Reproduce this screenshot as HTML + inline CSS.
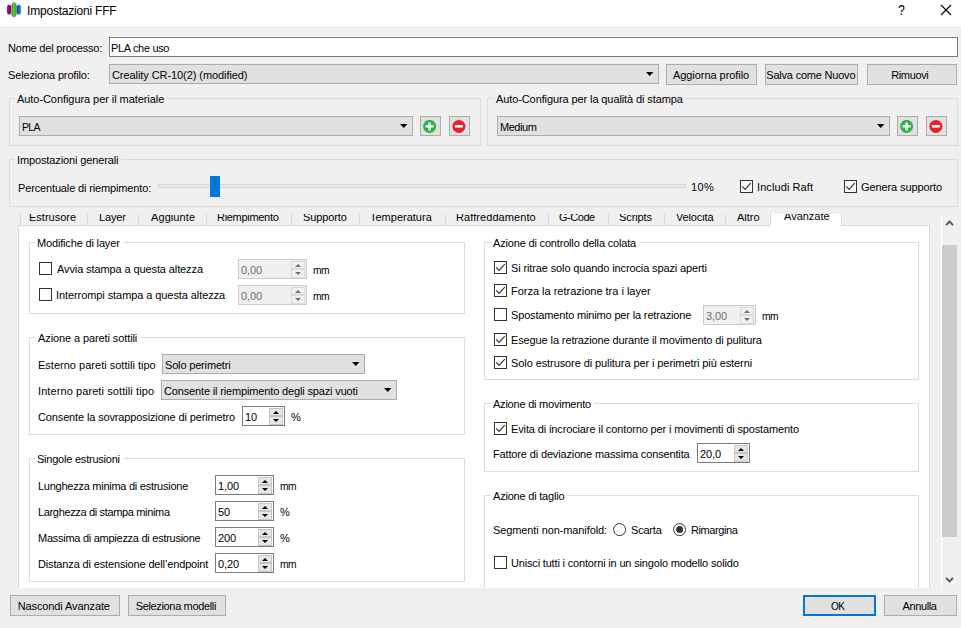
<!DOCTYPE html>
<html><head><meta charset="utf-8">
<style>
*{box-sizing:border-box;margin:0;padding:0}
html,body{width:961px;height:628px;overflow:hidden;background:#f0f0f0;font-family:"Liberation Sans",sans-serif;font-size:11px;color:#000}
.a{position:absolute}
.t{position:absolute;white-space:nowrap;line-height:13px;letter-spacing:-0.13px}
.btn{position:absolute;background:#e1e1e1;border:1px solid #adadad}
.grp{position:absolute;border:1px solid #dcdcdc}
.cb{position:absolute;width:13px;height:13px;border:1px solid #333;background:#fff}
.cb svg{position:absolute;left:0;top:0}
.arr{position:absolute;width:0;height:0;border-left:3.5px solid transparent;border-right:3.5px solid transparent;border-top:4px solid #000}
.spin{position:absolute;background:#fff;border:1px solid #7a7a7a}
.spin.dis{background:#f0f0f0;border-color:#cccccc;color:#6d6d6d}
.sb{position:absolute;right:1px;width:14px;background:#e6e6e6;border:1px solid #c6c6c6}
.dis .sb{background:#f0f0f0;border-color:#dadada}
.up{position:absolute;width:0;height:0;border-left:3px solid transparent;border-right:3px solid transparent;border-bottom:3px solid #000}
.dn{position:absolute;width:0;height:0;border-left:3px solid transparent;border-right:3px solid transparent;border-top:3px solid #000}
.dis .up{border-bottom-color:#6d6d6d}.dis .dn{border-top-color:#6d6d6d}
</style></head><body>

<div class="a" style="left:0;top:0;width:961px;height:26px;background:#fff"></div>
<svg class="a" style="left:6px;top:1px" width="16" height="18" viewBox="0 0 16 18">
 <defs>
  <linearGradient id="gp" x1="0" x2="1"><stop offset="0" stop-color="#e0006a"/><stop offset="1" stop-color="#4a0a80"/></linearGradient>
  <linearGradient id="gg" x1="0" x2="1"><stop offset="0" stop-color="#1a9a30"/><stop offset="0.5" stop-color="#7ac22a"/><stop offset="1" stop-color="#1a9a30"/></linearGradient>
  <linearGradient id="gb" x1="0" x2="1"><stop offset="0" stop-color="#1a2aa0"/><stop offset="1" stop-color="#29a8f0"/></linearGradient>
 </defs>
 <path d="M9 4.6 Q10.6 5 11.2 6.6 L11.2 12.8 Q10.6 14.4 9 14.8 Q7.4 14.4 7 12.8 L7 6.6 Q7.4 5 9 4.6Z" fill="url(#gp)" transform="translate(-6 -1)"/>
 <path d="M14 2 Q16 2.8 16.6 4.8 L16.6 14.8 Q16 16.8 14 17.6 Q12 16.8 11.5 14.8 L11.5 4.8 Q12 2.8 14 2Z" fill="url(#gg)" transform="translate(-6 -1)"/>
 <path d="M19 4.6 Q20.6 5 21.1 6.6 L21.1 12.8 Q20.6 14.4 19 14.8 Q17.4 14.4 16.8 12.8 L16.8 6.6 Q17.4 5 19 4.6Z" fill="url(#gb)" transform="translate(-6 -1)"/>
</svg>
<div class="t" style="left:27px;top:5px;font-size:12px;letter-spacing:-0.2px">Impostazioni FFF</div>
<div class="t" style="left:897.5px;top:4px;font-size:14px;letter-spacing:0;transform:scaleX(0.88);transform-origin:0 0;">?</div>
<svg class="a" style="left:940px;top:4px" width="12" height="12"><path d="M1 1L11 11M11 1L1 11" stroke="#000" stroke-width="1.1"/></svg>
<div class="t" style="left:8px;top:42px;letter-spacing:-0.206px;">Nome del processo:</div>
<div class="a" style="left:109px;top:37px;width:849px;height:20px;background:#fff;border:1px solid #7a7a7a"></div>
<div class="t" style="left:111px;top:42px;letter-spacing:-0.330px;">PLA che uso</div>
<div class="t" style="left:8px;top:69px;letter-spacing:-0.147px;">Seleziona profilo:</div>
<div class="btn" style="left:109px;top:64px;width:550px;height:20px"></div>
<div class="t" style="left:112px;top:69px;letter-spacing:-0.074px;">Creality CR-10(2) (modified)</div>
<svg class="a" style="left:646px;top:72px" width="8" height="5"><polygon points="0,0 7.4,0 3.7,4.1" fill="#000"/></svg>
<div class="btn" style="left:666px;top:64px;width:91px;height:21px;"></div>
<div class="t" style="left:672.9px;top:69px;letter-spacing:-0.047px;">Aggiorna profilo</div>
<div class="btn" style="left:765px;top:64px;width:93px;height:21px;"></div>
<div class="t" style="left:766.3px;top:69px;letter-spacing:-0.207px;">Salva come Nuovo</div>
<div class="btn" style="left:867px;top:64px;width:90px;height:21px;"></div>
<div class="t" style="left:891.2px;top:69px;letter-spacing:-0.367px;">Rimuovi</div>
<div class="grp" style="left:9px;top:98px;width:472px;height:48px"></div>
<div class="t" style="left:15px;top:93px;letter-spacing:-0.063px;padding:0 3px 0 2px;background:#f0f0f0;">Auto-Configura per il materiale</div>
<div class="btn" style="left:19px;top:116px;width:394px;height:20px"></div>
<div class="t" style="left:22px;top:121px;letter-spacing:-0.7px;transform:scaleX(0.954);transform-origin:0 0;">PLA</div>
<svg class="a" style="left:400px;top:124px" width="8" height="5"><polygon points="0,0 7.4,0 3.7,4.1" fill="#000"/></svg>
<div class="btn" style="left:420px;top:116px;width:21px;height:20px"><div class="a" style="left:2px;top:3px;line-height:0"><svg width="13" height="13" viewBox="0 0 13 13"><circle cx="6.6" cy="6.4" r="6.5" fill="#2fb24a"/><path d="M6.6 2.4v8.2M2.5 6.4h8.2" stroke="#fff" stroke-width="2.3"/></svg></div></div>
<div class="btn" style="left:449px;top:116px;width:21px;height:20px"><div class="a" style="left:2px;top:3px;line-height:0"><svg width="14" height="13" viewBox="0 0 14 13" style="overflow:visible"><circle cx="6.9" cy="6.4" r="6.5" fill="#e8202a"/><path d="M2.9 6.3h8" stroke="#fff" stroke-width="2.5"/></svg></div></div>
<div class="grp" style="left:487px;top:98px;width:471px;height:48px"></div>
<div class="t" style="left:494px;top:93px;letter-spacing:-0.103px;padding:0 3px 0 2px;background:#f0f0f0;">Auto-Configura per la qualit&agrave; di stampa</div>
<div class="btn" style="left:497px;top:116px;width:393px;height:20px"></div>
<div class="t" style="left:500px;top:121px;letter-spacing:-0.460px;">Medium</div>
<svg class="a" style="left:877px;top:124px" width="8" height="5"><polygon points="0,0 7.4,0 3.7,4.1" fill="#000"/></svg>
<div class="btn" style="left:897px;top:116px;width:21px;height:20px"><div class="a" style="left:2px;top:3px;line-height:0"><svg width="13" height="13" viewBox="0 0 13 13"><circle cx="6.6" cy="6.4" r="6.5" fill="#2fb24a"/><path d="M6.6 2.4v8.2M2.5 6.4h8.2" stroke="#fff" stroke-width="2.3"/></svg></div></div>
<div class="btn" style="left:926px;top:116px;width:21px;height:20px"><div class="a" style="left:2px;top:3px;line-height:0"><svg width="14" height="13" viewBox="0 0 14 13" style="overflow:visible"><circle cx="6.9" cy="6.4" r="6.5" fill="#e8202a"/><path d="M2.9 6.3h8" stroke="#fff" stroke-width="2.5"/></svg></div></div>
<div class="grp" style="left:9px;top:159px;width:949px;height:48px"></div>
<div class="t" style="left:15px;top:154px;letter-spacing:-0.125px;padding:0 3px 0 2px;background:#f0f0f0;">Impostazioni generali</div>
<div class="t" style="left:18px;top:182px;letter-spacing:-0.144px;">Percentuale di riempimento:</div>
<div class="a" style="left:158px;top:184px;width:528px;height:4px;background:#e7eaea;border:1px solid #d6d6d6"></div>
<div class="a" style="left:210px;top:176px;width:10px;height:21px;background:#0078d7"></div>
<div class="t" style="left:691px;top:181px;letter-spacing:0.400px;">10%</div>
<div class="cb" style="left:740px;top:180px"><svg width="11" height="11" viewBox="0 0 11 11"><path d="M1.2 5.4L4.1 8.3L9.8 2.2" fill="none" stroke="#333" stroke-width="1.2"/></svg></div>
<div class="t" style="left:757px;top:181px;letter-spacing:0.091px;">Includi Raft</div>
<div class="cb" style="left:844px;top:180px"><svg width="11" height="11" viewBox="0 0 11 11"><path d="M1.2 5.4L4.1 8.3L9.8 2.2" fill="none" stroke="#333" stroke-width="1.2"/></svg></div>
<div class="t" style="left:861px;top:181px;letter-spacing:-0.107px;">Genera supporto</div>
<div class="a" style="left:0;top:214px;width:940px;height:374px;overflow:hidden">
<div class="a" style="left:20px;top:0px;width:1px;height:11px;background:#d9d9d9"></div>
<div class="a" style="left:87px;top:0px;width:1px;height:11px;background:#d9d9d9"></div>
<div class="a" style="left:138px;top:0px;width:1px;height:11px;background:#d9d9d9"></div>
<div class="a" style="left:206px;top:0px;width:1px;height:11px;background:#d9d9d9"></div>
<div class="a" style="left:291px;top:0px;width:1px;height:11px;background:#d9d9d9"></div>
<div class="a" style="left:359px;top:0px;width:1px;height:11px;background:#d9d9d9"></div>
<div class="a" style="left:445px;top:0px;width:1px;height:11px;background:#d9d9d9"></div>
<div class="a" style="left:548px;top:0px;width:1px;height:11px;background:#d9d9d9"></div>
<div class="a" style="left:608px;top:0px;width:1px;height:11px;background:#d9d9d9"></div>
<div class="a" style="left:664px;top:0px;width:1px;height:11px;background:#d9d9d9"></div>
<div class="a" style="left:725px;top:0px;width:1px;height:11px;background:#d9d9d9"></div>
<div class="t" style="left:29px;top:-3px;letter-spacing:0.000px;">Estrusore</div>
<div class="t" style="left:99px;top:-3px;letter-spacing:-0.175px;">Layer</div>
<div class="t" style="left:151px;top:-3px;letter-spacing:0.086px;">Aggiunte</div>
<div class="t" style="left:217px;top:-3px;letter-spacing:-0.300px;">Riempimento</div>
<div class="t" style="left:303px;top:-3px;letter-spacing:-0.100px;">Supporto</div>
<div class="t" style="left:370px;top:-3px;letter-spacing:0.000px;">Temperatura</div>
<div class="t" style="left:456px;top:-3px;letter-spacing:0.077px;">Raffreddamento</div>
<div class="t" style="left:559px;top:-3px;letter-spacing:-0.460px;">G-Code</div>
<div class="t" style="left:619px;top:-3px;letter-spacing:-0.100px;">Scripts</div>
<div class="t" style="left:676px;top:-3px;letter-spacing:-0.143px;">Velocit&agrave;</div>
<div class="t" style="left:737px;top:-3px;letter-spacing:0.000px;">Altro</div>
<div class="a" style="left:18px;top:11px;width:912px;height:400px;background:#fff;border:1px solid #d9d9d9"></div>
<div class="a" style="left:770px;top:-14px;width:72px;height:26px;background:#fff;border:1px solid #d9d9d9;border-bottom:none"></div>
<div class="t" style="left:784px;top:-4px;letter-spacing:0.000px;">Avanzate</div>
<div class="grp" style="left:29px;top:28px;width:436px;height:72px"></div>
<div class="t" style="left:35px;top:23px;letter-spacing:-0.165px;padding:0 3px 0 2px;background:#fff;">Modifiche di layer</div>
<div class="cb" style="left:39px;top:48px"></div>
<div class="t" style="left:57px;top:49px;letter-spacing:-0.107px;">Avvia stampa a questa altezza</div>
<div class="spin dis" style="left:238px;top:45px;width:69px;height:20px"><div class="t" style="left:2px;top:4px">0,00</div><div class="sb" style="top:1px;height:8px"><div class="up" style="left:3px;top:2px"></div></div><div class="sb" style="top:9px;height:9px"><div class="dn" style="left:3px;top:2px"></div></div></div>
<div class="t" style="left:313px;top:50px;letter-spacing:-0.7px;transform:scaleX(0.933);transform-origin:0 0;">mm</div>
<div class="cb" style="left:39px;top:74px"></div>
<div class="t" style="left:56px;top:75px;letter-spacing:-0.079px;">Interrompi stampa a questa altezza</div>
<div class="spin dis" style="left:238px;top:71px;width:69px;height:20px"><div class="t" style="left:2px;top:4px">0,00</div><div class="sb" style="top:1px;height:8px"><div class="up" style="left:3px;top:2px"></div></div><div class="sb" style="top:9px;height:9px"><div class="dn" style="left:3px;top:2px"></div></div></div>
<div class="t" style="left:313px;top:76px;letter-spacing:-0.7px;transform:scaleX(0.933);transform-origin:0 0;">mm</div>
<div class="grp" style="left:29px;top:123px;width:436px;height:98px"></div>
<div class="t" style="left:36px;top:118px;letter-spacing:-0.100px;padding:0 3px 0 2px;background:#fff;">Azione a pareti sottili</div>
<div class="t" style="left:38px;top:145px;letter-spacing:0.012px;">Esterno pareti sottili tipo</div>
<div class="btn" style="left:162px;top:140px;width:203px;height:20px"></div>
<div class="t" style="left:165px;top:145px;letter-spacing:-0.169px;">Solo perimetri</div>
<svg class="a" style="left:352px;top:148px" width="8" height="5"><polygon points="0,0 7.4,0 3.7,4.1" fill="#000"/></svg>
<div class="t" style="left:38px;top:171px;letter-spacing:0.088px;">Interno pareti sottili tipo</div>
<div class="btn" style="left:161px;top:166px;width:236px;height:20px"></div>
<div class="t" style="left:164px;top:171px;letter-spacing:-0.150px;">Consente il riempimento degli spazi vuoti</div>
<svg class="a" style="left:384px;top:174px" width="8" height="5"><polygon points="0,0 7.4,0 3.7,4.1" fill="#000"/></svg>
<div class="t" style="left:38px;top:197px;letter-spacing:-0.136px;">Consente la sovrapposizione di perimetro</div>
<div class="spin" style="left:242px;top:192px;width:43px;height:20px"><div class="t" style="left:2px;top:4px">10</div><div class="sb" style="top:1px;height:8px"><div class="up" style="left:3px;top:2px"></div></div><div class="sb" style="top:9px;height:9px"><div class="dn" style="left:3px;top:2px"></div></div></div>
<div class="t" style="left:291px;top:197px;">%</div>
<div class="grp" style="left:29px;top:244px;width:436px;height:124px"></div>
<div class="t" style="left:35px;top:239px;letter-spacing:-0.224px;padding:0 3px 0 2px;background:#fff;">Singole estrusioni</div>
<div class="t" style="left:38px;top:266px;letter-spacing:-0.259px;">Lunghezza minima di estrusione</div>
<div class="spin" style="left:215px;top:261px;width:59px;height:20px"><div class="t" style="left:2px;top:4px">1,00</div><div class="sb" style="top:1px;height:8px"><div class="up" style="left:3px;top:2px"></div></div><div class="sb" style="top:9px;height:9px"><div class="dn" style="left:3px;top:2px"></div></div></div>
<div class="t" style="left:280px;top:266px;letter-spacing:-0.7px;transform:scaleX(0.933);transform-origin:0 0;">mm</div>
<div class="t" style="left:38px;top:292px;letter-spacing:-0.344px;">Larghezza di stampa minima</div>
<div class="spin" style="left:215px;top:287px;width:59px;height:20px"><div class="t" style="left:2px;top:4px">50</div><div class="sb" style="top:1px;height:8px"><div class="up" style="left:3px;top:2px"></div></div><div class="sb" style="top:9px;height:9px"><div class="dn" style="left:3px;top:2px"></div></div></div>
<div class="t" style="left:280px;top:292px;">%</div>
<div class="t" style="left:38px;top:318px;letter-spacing:-0.266px;">Massima di ampiezza di estrusione</div>
<div class="spin" style="left:215px;top:313px;width:59px;height:20px"><div class="t" style="left:2px;top:4px">200</div><div class="sb" style="top:1px;height:8px"><div class="up" style="left:3px;top:2px"></div></div><div class="sb" style="top:9px;height:9px"><div class="dn" style="left:3px;top:2px"></div></div></div>
<div class="t" style="left:280px;top:318px;">%</div>
<div class="t" style="left:38px;top:344px;letter-spacing:-0.146px;">Distanza di estensione dell&rsquo;endpoint</div>
<div class="spin" style="left:215px;top:339px;width:59px;height:20px"><div class="t" style="left:2px;top:4px">0,20</div><div class="sb" style="top:1px;height:8px"><div class="up" style="left:3px;top:2px"></div></div><div class="sb" style="top:9px;height:9px"><div class="dn" style="left:3px;top:2px"></div></div></div>
<div class="t" style="left:280px;top:344px;letter-spacing:-0.7px;transform:scaleX(0.933);transform-origin:0 0;">mm</div>
<div class="grp" style="left:484px;top:28px;width:435px;height:138px"></div>
<div class="t" style="left:491px;top:23px;letter-spacing:-0.174px;padding:0 3px 0 2px;background:#fff;">Azione di controllo della colata</div>
<div class="cb" style="left:494px;top:47px"><svg width="11" height="11" viewBox="0 0 11 11"><path d="M1.2 5.4L4.1 8.3L9.8 2.2" fill="none" stroke="#333" stroke-width="1.2"/></svg></div>
<div class="t" style="left:511px;top:48px;letter-spacing:-0.124px;">Si ritrae solo quando incrocia spazi aperti</div>
<div class="cb" style="left:494px;top:70px"><svg width="11" height="11" viewBox="0 0 11 11"><path d="M1.2 5.4L4.1 8.3L9.8 2.2" fill="none" stroke="#333" stroke-width="1.2"/></svg></div>
<div class="t" style="left:511px;top:71px;letter-spacing:-0.010px;">Forza la retrazione tra i layer</div>
<div class="cb" style="left:494px;top:94px"></div>
<div class="t" style="left:511px;top:95px;letter-spacing:-0.157px;">Spostamento minimo per la retrazione</div>
<div class="spin dis" style="left:703px;top:91px;width:53px;height:20px"><div class="t" style="left:2px;top:4px">3,00</div><div class="sb" style="top:1px;height:8px"><div class="up" style="left:3px;top:2px"></div></div><div class="sb" style="top:9px;height:9px"><div class="dn" style="left:3px;top:2px"></div></div></div>
<div class="t" style="left:762px;top:96px;letter-spacing:-0.7px;transform:scaleX(0.933);transform-origin:0 0;">mm</div>
<div class="cb" style="left:494px;top:119px"><svg width="11" height="11" viewBox="0 0 11 11"><path d="M1.2 5.4L4.1 8.3L9.8 2.2" fill="none" stroke="#333" stroke-width="1.2"/></svg></div>
<div class="t" style="left:511px;top:120px;letter-spacing:-0.115px;">Esegue la retrazione durante il movimento di pulitura</div>
<div class="cb" style="left:494px;top:142px"><svg width="11" height="11" viewBox="0 0 11 11"><path d="M1.2 5.4L4.1 8.3L9.8 2.2" fill="none" stroke="#333" stroke-width="1.2"/></svg></div>
<div class="t" style="left:511px;top:143px;letter-spacing:-0.087px;">Solo estrusore di pulitura per i perimetri pi&ugrave; esterni</div>
<div class="grp" style="left:484px;top:189px;width:435px;height:69px"></div>
<div class="t" style="left:491px;top:184px;letter-spacing:-0.222px;padding:0 3px 0 2px;background:#fff;">Azione di movimento</div>
<div class="cb" style="left:494px;top:208px"><svg width="11" height="11" viewBox="0 0 11 11"><path d="M1.2 5.4L4.1 8.3L9.8 2.2" fill="none" stroke="#333" stroke-width="1.2"/></svg></div>
<div class="t" style="left:511px;top:209px;letter-spacing:-0.128px;">Evita di incrociare il contorno per i movimenti di spostamento</div>
<div class="t" style="left:493px;top:234px;letter-spacing:-0.146px;">Fattore di deviazione massima consentita</div>
<div class="spin" style="left:697px;top:229px;width:53px;height:20px"><div class="t" style="left:2px;top:4px">20,0</div><div class="sb" style="top:1px;height:8px"><div class="up" style="left:3px;top:2px"></div></div><div class="sb" style="top:9px;height:9px"><div class="dn" style="left:3px;top:2px"></div></div></div>
<div class="grp" style="left:484px;top:281px;width:435px;height:146px"></div>
<div class="t" style="left:491px;top:276px;letter-spacing:-0.207px;padding:0 3px 0 2px;background:#fff;">Azione di taglio</div>
<div class="t" style="left:493px;top:310px;letter-spacing:-0.100px;">Segmenti non-manifold:</div>
<svg class="a" style="left:613px;top:309px" width="14" height="14"><circle cx="6.6" cy="6.6" r="6" fill="#fff" stroke="#333" stroke-width="1"/></svg>
<div class="t" style="left:631px;top:310px;letter-spacing:-0.200px;">Scarta</div>
<svg class="a" style="left:673px;top:309px" width="14" height="14"><circle cx="6.6" cy="6.6" r="6" fill="#fff" stroke="#333" stroke-width="1"/><circle cx="6.6" cy="6.6" r="3.5" fill="#333"/></svg>
<div class="t" style="left:691px;top:310px;letter-spacing:-0.413px;">Rimargina</div>
<div class="cb" style="left:494px;top:342px"></div>
<div class="t" style="left:511px;top:343px;letter-spacing:-0.173px;">Unisci tutti i contorni in un singolo modello solido</div>
</div>
<div class="a" style="left:941px;top:214px;width:1px;height:374px;background:#fff"></div>
<svg class="a" style="left:944px;top:218px" width="11" height="10"><path d="M2 7.2L5.5 3.6L9 7.2" fill="none" stroke="#555" stroke-width="1.9"/></svg>
<div class="a" style="left:942px;top:245px;width:15px;height:292px;background:#cdcdcd"></div>
<svg class="a" style="left:944px;top:575px" width="11" height="10"><path d="M2 2.8L5.5 6.4L9 2.8" fill="none" stroke="#555" stroke-width="1.9"/></svg>
<div class="btn" style="left:10px;top:595px;width:110px;height:21px;"></div>
<div class="t" style="left:17.7px;top:600px;letter-spacing:-0.106px;">Nascondi Avanzate</div>
<div class="btn" style="left:128px;top:595px;width:98px;height:21px;"></div>
<div class="t" style="left:135.7px;top:600px;letter-spacing:-0.344px;">Seleziona modelli</div>
<div class="btn" style="left:803px;top:595px;width:73px;height:21px;border:2px solid #0078d7"></div>
<div class="t" style="left:830.5px;top:600px;letter-spacing:-0.7px;transform:scaleX(0.915);transform-origin:0 0;">OK</div>
<div class="btn" style="left:884px;top:595px;width:73px;height:21px;"></div>
<div class="t" style="left:902.6px;top:600px;letter-spacing:-0.400px;">Annulla</div>
</body></html>
